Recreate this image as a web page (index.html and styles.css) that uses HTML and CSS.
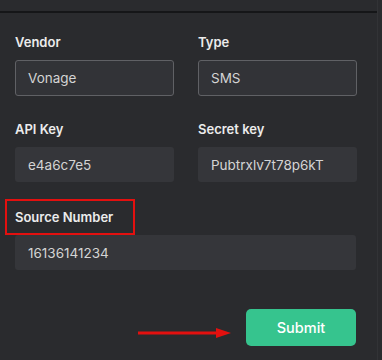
FILE: index.html
```html
<!DOCTYPE html>
<html lang="en">
<head>
    <meta charset="UTF-8">
    <meta name="viewport" content="width=device-width, initial-scale=1.0">
    <title>SMS Settings</title>
    <link rel="stylesheet" href="styles.css">
</head>
<body>
    <div class="panel">
        <div class="panel-top"></div>

        <form class="settings-form">
            <div class="form-row">
                <div class="form-group">
                    <label>Vendor</label>
                    <div class="field field-select">Vonage</div>
                </div>
                <div class="form-group">
                    <label>Type</label>
                    <div class="field field-select">SMS</div>
                </div>
            </div>

            <div class="form-row">
                <div class="form-group">
                    <label>API Key</label>
                    <div class="field">e4a6c7e5</div>
                </div>
                <div class="form-group">
                    <label>Secret key</label>
                    <div class="field">Pubtrxlv7t78p6kT</div>
                </div>
            </div>

            <div class="form-group source-group">
                <label class="highlighted"><span>Source Number</span></label>
                <div class="field">16136141234</div>
            </div>

            <div class="form-actions">
                <svg class="pointer-arrow" width="93" height="12" viewBox="0 0 93 12">
                    <line x1="0" y1="6" x2="82" y2="6" stroke="#e3100f" stroke-width="3"/>
                    <polygon points="78,1 93,6 78,11" fill="#e3100f"/>
                </svg>
                <button type="button" class="btn-submit">Submit</button>
            </div>
        </form>
    </div>
</body>
</html>
```
FILE: styles.css
```css
:root {
    --bg-color: #2a2b2e;
    --field-bg: #35363a;
    --text-color: #e6e6e6;
    --accent: #36c48e;
    --annotate: #e3100f;
}

* {
    margin: 0;
    padding: 0;
    box-sizing: border-box;
}

body {
    font-family: Inter, 'Noto Sans', sans-serif;
    background-color: var(--bg-color);
    color: var(--text-color);
    width: 382px;
    height: 360px;
    overflow: hidden;
}

.panel {
    width: 378px;
    height: 360px;
    background-color: var(--bg-color);
    border-right: 1px solid #323336;
}

.panel-top {
    height: 13px;
    border-bottom: 2px solid #151618;
}

.settings-form {
    padding: 20px 21px 0 15px;
    display: flex;
    flex-direction: column;
    gap: 24px;
}

.form-row {
    display: grid;
    grid-template-columns: 159px 159px;
    gap: 24px;
}

.form-group label {
    display: block;
    font-size: 13px;
    font-weight: 600;
    line-height: 18px;
    margin-bottom: 9px;
    color: #ececec;
}

.source-group {
    margin-top: 2px;
}

.field {
    height: 35px;
    padding: 0 13px;
    display: flex;
    align-items: center;
    background-color: var(--field-bg);
    border-radius: 3px;
    font-size: 13.5px;
    color: #d4d4d4;
}

.field-select {
    height: 36px;
    padding: 0 12px;
    background-color: #323337;
    border: 1px solid #606165;
}

/* annotation box round the label */
.highlighted {
    position: relative;
}

.highlighted::before {
    content: "";
    position: absolute;
    left: -10px;
    top: -9px;
    width: 126px;
    height: 32px;
    border: 2px solid var(--annotate);
}

.form-actions {
    display: flex;
    justify-content: flex-end;
    align-items: center;
    gap: 15px;
    margin-top: 15px;
}

.pointer-arrow {
    margin-top: 10px;
}

.btn-submit {
    width: 110px;
    height: 37px;
    background-color: var(--accent);
    color: #fff;
    border: none;
    border-radius: 5px;
    font-family: inherit;
    font-size: 14.5px;
    font-weight: 500;
}
```
